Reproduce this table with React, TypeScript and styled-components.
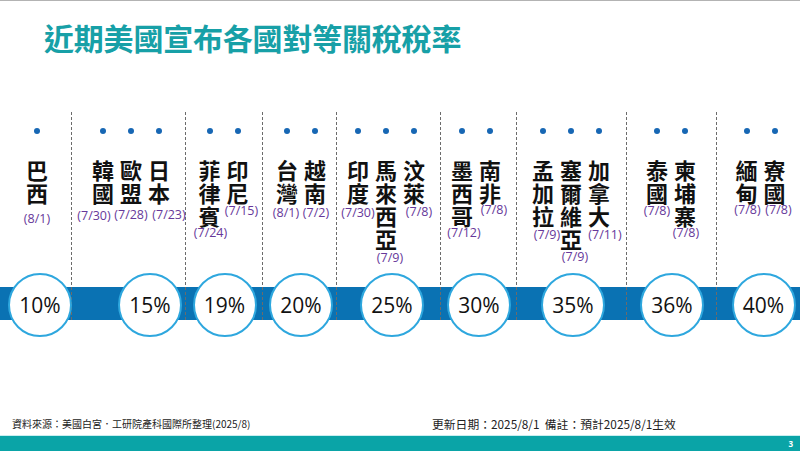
import React from "react";
import styled, { createGlobalStyle } from "styled-components";

const Global = createGlobalStyle`
  html, body { margin: 0; padding: 0; background: #ffffff; }
  body { width: 800px; height: 451px; overflow: hidden; }
`;

const CJK = `"Noto Sans CJK TC", "Noto Sans", sans-serif`;
const LATIN = `"Open Sans", "Noto Sans CJK TC", sans-serif`;

const Page = styled.div`
  width: 800px;
  height: 451px;
  display: flex;
  flex-direction: column;
  border-top: 1px solid #b3b3b3;
  box-sizing: border-box;
  background: #fff;
  overflow: hidden;
`;

const Header = styled.header`
  height: 111px;
  padding: 18px 0 0 44px;
  box-sizing: border-box;
`;

const Title = styled.h1`
  margin: 0;
  font-family: ${CJK};
  font-weight: 700;
  font-size: 30px;
  line-height: 36px;
  color: #17a0a7;
  letter-spacing: -0.2px;
`;

const Chart = styled.section`
  display: grid;
  grid-template-columns: 72px 114px 77px 74px 104px 76px 110px 90px 83px;
  height: 208px;
`;

const Group = styled.div<{ $first?: boolean }>`
  display: flex;
  flex-direction: column;
  border-left: ${(p) => (p.$first ? "none" : "1px dashed #6b6b6b")};
  margin-left: ${(p) => (p.$first ? "0" : "-1px")};
  min-width: 0;
`;

const Countries = styled.div<{ $shift: number }>`
  height: 175px;
  display: flex;
  justify-content: center;
  align-items: flex-start;
  padding-top: 16px;
  box-sizing: border-box;
  transform: translateX(${(p) => p.$shift}px);
`;

const Country = styled.div`
  width: 28px;
  display: flex;
  flex-direction: column;
  align-items: center;
`;

const Dot = styled.span`
  width: 6px;
  height: 6px;
  border-radius: 50%;
  background: #1767b4;
  flex: none;
`;

const Name = styled.div`
  margin-top: 24px;
  display: flex;
  flex-direction: column;
  align-items: center;
  font-family: ${CJK};
  font-weight: 700;
  font-size: 22px;
  line-height: 23px;
  color: #111;
`;

const Char = styled.span`
  display: block;
`;

const DateLabel = styled.span<{ $dx: number; $dy: number }>`
  margin-top: ${(p) => p.$dy}px;
  font-family: ${LATIN};
  font-size: 12.5px;
  line-height: 12px;
  color: #66389a;
  white-space: nowrap;
  transform: translateX(${(p) => p.$dx}px);
`;

const BarCell = styled.div`
  height: 33px;
  background: #0a72b3;
  display: flex;
  justify-content: center;
  align-items: center;
`;

const Rate = styled.div<{ $shift: number }>`
  flex: none;
  width: 64px;
  height: 64px;
  border-radius: 50%;
  background: #fff;
  border: 2px solid #2ea7de;
  box-sizing: border-box;
  display: flex;
  align-items: center;
  justify-content: center;
  font-family: ${LATIN};
  font-size: 21px;
  color: #111;
  transform: translate(${(p) => p.$shift}px, 1px);
  position: relative;
  z-index: 1;
`;

const Footer = styled.footer`
  flex: 1;
  display: grid;
  grid-template-columns: 420px 1fr;
  align-items: end;
  padding: 0 0 3px 12px;
  box-sizing: border-box;
`;

const Source = styled.span`
  font-family: ${CJK};
  font-size: 10px;
  line-height: 14px;
  color: #222;
  margin-bottom: 1px;
`;

const Note = styled.span`
  font-family: ${CJK};
  font-size: 11.8px;
  line-height: 16px;
  color: #222;
  white-space: pre;
`;

const Band = styled.div`
  height: 15px;
  border-top: 1px solid #c9eef0;
  background: #0aa4a7;
  display: flex;
  justify-content: flex-end;
  align-items: center;
  padding-right: 7px;
`;

const PageNo = styled.span`
  font-family: ${LATIN};
  font-weight: 700;
  font-size: 8px;
  color: #fff;
`;

type Item = { n: string; d: string; dx?: number; dy?: number };
type G = { w: number; rate: string; shift: number; cshift: number; items: Item[] };

const groups: G[] = [
  { w: 72, rate: "10%", shift: 1, cshift: 4, items: [{ n: "巴西", d: "(8/1)", dy: 9 }] },
  {
    w: 114,
    rate: "15%",
    shift: 2,
    cshift: 21,
    items: [
      { n: "韓國", d: "(7/30)", dx: -9, dy: 6 },
      { n: "歐盟", d: "(7/28)", dy: 5 },
      { n: "日本", d: "(7/23)", dx: 10, dy: 5 },
    ],
  },
  {
    w: 77,
    rate: "19%",
    shift: -1,
    cshift: 0,
    items: [
      { n: "菲律賓", d: "(7/24)", dx: 1 },
      { n: "印尼", d: "(7/15)", dx: 4, dy: 1 },
    ],
  },
  {
    w: 74,
    rate: "20%",
    shift: 1,
    cshift: 1,
    items: [
      { n: "台灣", d: "(8/1)", dx: -1, dy: 3 },
      { n: "越南", d: "(7/2)", dx: 1, dy: 3 },
    ],
  },
  {
    w: 104,
    rate: "25%",
    shift: -3,
    cshift: 3,
    items: [
      { n: "印度", d: "(7/30)", dy: 3 },
      { n: "馬來西亞", d: "(7/9)", dx: 4, dy: 2 },
      { n: "汶萊", d: "(7/8)", dx: 5, dy: 2 },
    ],
  },
  {
    w: 76,
    rate: "30%",
    shift: -3,
    cshift: 0,
    items: [
      { n: "墨西哥", d: "(7/12)", dx: 2 },
      { n: "南非", d: "(7/8)", dx: 4 },
    ],
  },
  {
    w: 110,
    rate: "35%",
    shift: -1,
    cshift: 1,
    items: [
      { n: "孟加拉", d: "(7/9)", dx: 4, dy: 2 },
      { n: "塞爾維亞", d: "(7/9)", dx: 4, dy: 1 },
      { n: "加拿大", d: "(7/11)", dx: 6, dy: 2 },
    ],
  },
  {
    w: 90,
    rate: "36%",
    shift: -1,
    cshift: 0,
    items: [
      { n: "泰國", d: "(7/8)", dy: 1 },
      { n: "柬埔寨", d: "(7/8)", dx: 1 },
    ],
  },
  {
    w: 83,
    rate: "40%",
    shift: 2,
    cshift: 5,
    items: [
      { n: "緬甸", d: "(7/8)", dx: 1 },
      { n: "寮國", d: "(7/8)", dx: 4 },
    ],
  },
];

export default function App() {
  return (
    <>
      <Global />
      <Page>
        <Header>
          <Title>近期美國宣布各國對等關稅稅率</Title>
        </Header>
        <Chart>
          {groups.map((g, gi) => (
            <Group key={g.rate} $first={gi === 0}>
              <Countries $shift={g.shift}>
                {g.items.map((it) => (
                  <Country key={it.n}>
                    <Dot />
                    <Name>
                      {Array.from(it.n).map((c, i) => (
                        <Char key={i}>{c}</Char>
                      ))}
                    </Name>
                    <DateLabel $dx={it.dx ?? 0} $dy={it.dy ?? 0}>
                      {it.d}
                    </DateLabel>
                  </Country>
                ))}
              </Countries>
              <BarCell>
                <Rate $shift={g.cshift}>{g.rate}</Rate>
              </BarCell>
            </Group>
          ))}
        </Chart>
        <Footer>
          <Source>資料來源：美國白宮．工研院產科國際所整理(2025/8)</Source>
          <Note>{"更新日期：2025/8/1  備註：預計2025/8/1生效"}</Note>
        </Footer>
        <Band>
          <PageNo>3</PageNo>
        </Band>
      </Page>
    </>
  );
}
